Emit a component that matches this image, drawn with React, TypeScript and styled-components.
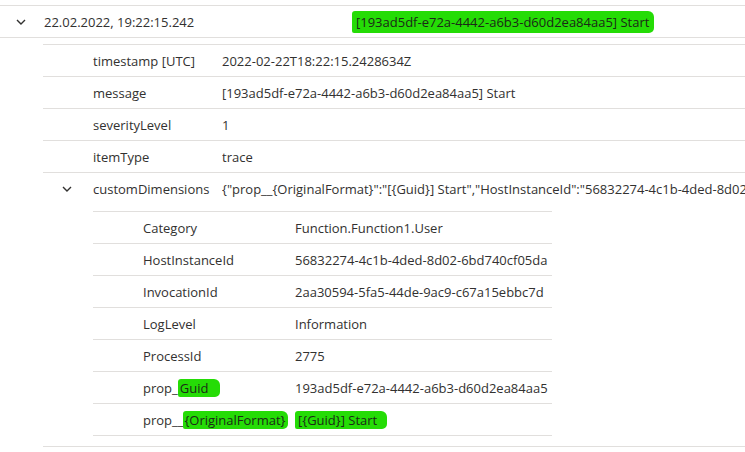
import React from 'react'
import styled, { createGlobalStyle } from 'styled-components'

const GlobalStyle = createGlobalStyle`
  html, body {
    margin: 0;
    padding: 0;
    background: #ffffff;
  }
  body {
    font-family: "Open Sans", "Noto Sans", sans-serif;
    font-size: 13px;
    color: #323130;
  }
`

const Page = styled.div`
  padding-top: 5px;
  width: 745px;
  height: 452px;
  overflow: hidden;
  box-sizing: border-box;
`

const HeaderRow = styled.div`
  display: flex;
  align-items: center;
  height: 33px;
  border-top: 1px solid #e1dfdd;
  border-bottom: 1px solid #e1dfdd;
  box-sizing: border-box;
`

const ToggleCell = styled.div<{ $width: number }>`
  flex: 0 0 ${p => p.$width}px;
  display: flex;
  justify-content: center;
  align-items: center;
  padding-right: 2px;
  box-sizing: border-box;
`

const HeaderTime = styled.div`
  flex: 0 0 308px;
  white-space: nowrap;
`

const HeaderMessage = styled.div`
  flex: 1;
  white-space: nowrap;
`

const Marker = styled.span<{ $pad: string }>`
  background: #25dc06;
  color: #1b2a17;
  padding: ${p => p.$pad};
  border-radius: 3px 6px 5px 2px;
`

const Details = styled.div`
  margin-top: 6px;
  margin-left: 43px;
`

const DetailRow = styled.div`
  display: flex;
  align-items: center;
  height: 32px;
  border-top: 1px solid #e1dfdd;
  box-sizing: border-box;
  white-space: nowrap;
  overflow: hidden;
`

const DetailKey = styled.div`
  flex: 0 0 129px;
`

const DetailValue = styled.div`
  flex: 1;
  white-space: nowrap;
  overflow: hidden;
`

const Section = styled.div`
  border-top: 1px solid #e1dfdd;
  border-bottom: 1px solid #e1dfdd;
  padding-bottom: 10px;
  & > ${DetailRow} {
    border-top: none;
  }
`

const Nested = styled.div`
  margin-top: 6px;
  margin-left: 50px;
  width: 459px;
  border-bottom: 1px solid #e1dfdd;
`

const NestedRow = styled.div`
  display: flex;
  align-items: center;
  height: 32px;
  border-top: 1px solid #e1dfdd;
  box-sizing: border-box;
  white-space: nowrap;
`

const NestedKey = styled.div`
  flex: 0 0 202px;
  padding-left: 50px;
  box-sizing: border-box;
`

const NestedValue = styled.div`
  flex: 1;
`

type Pair = { key: React.ReactNode; value: React.ReactNode }

const details: Pair[] = [
  { key: 'timestamp [UTC]', value: '2022-02-22T18:22:15.2428634Z' },
  { key: 'message', value: '[193ad5df-e72a-4442-a6b3-d60d2ea84aa5] Start' },
  { key: 'severityLevel', value: '1' },
  { key: 'itemType', value: 'trace' },
]

const dimensions: Pair[] = [
  { key: 'Category', value: 'Function.Function1.User' },
  { key: 'HostInstanceId', value: '56832274-4c1b-4ded-8d02-6bd740cf05da' },
  { key: 'InvocationId', value: '2aa30594-5fa5-44de-9ac9-c67a15ebbc7d' },
  { key: 'LogLevel', value: 'Information' },
  { key: 'ProcessId', value: '2775' },
  {
    key: (
      <>
        prop_<Marker $pad="0 12px 0 2px">Guid</Marker>
      </>
    ),
    value: '193ad5df-e72a-4442-a6b3-d60d2ea84aa5',
  },
  {
    key: (
      <>
        prop__<Marker $pad="0 3px 0 1px">{'{OriginalFormat}'}</Marker>
      </>
    ),
    value: <Marker $pad="0 10px 0 3px">{'[{Guid}] Start'}</Marker>,
  },
]

const Chevron = () => (
  <svg width="10" height="6" viewBox="0 0 10 6" fill="none">
    <polyline points="1,1 5,5 9,1" stroke="#323130" strokeWidth="1.4" />
  </svg>
)

export default function App() {
  return (
    <>
      <GlobalStyle />
      <Page>
        <HeaderRow>
          <ToggleCell $width={44}>
            <Chevron />
          </ToggleCell>
          <HeaderTime>22.02.2022, 19:22:15.242</HeaderTime>
          <HeaderMessage>
            <Marker $pad="2px 5px 2px 4px">[193ad5df-e72a-4442-a6b3-d60d2ea84aa5] Start</Marker>
          </HeaderMessage>
        </HeaderRow>

        <Details>
          {details.map((d, i) => (
            <DetailRow key={i}>
              <ToggleCell $width={50} />
              <DetailKey>{d.key}</DetailKey>
              <DetailValue>{d.value}</DetailValue>
            </DetailRow>
          ))}

          <Section>
            <DetailRow>
              <ToggleCell $width={50}>
                <Chevron />
              </ToggleCell>
              <DetailKey>customDimensions</DetailKey>
              <DetailValue>
                {'{"prop__{OriginalFormat}":"[{Guid}] Start","HostInstanceId":"56832274-4c1b-4ded-8d02-6bd740cf05da","InvocationId":"2aa30594-5fa5-44de-9ac9-c67a15ebbc7d"}'}
              </DetailValue>
            </DetailRow>
            <Nested>
              {dimensions.map((d, i) => (
                <NestedRow key={i}>
                  <NestedKey>{d.key}</NestedKey>
                  <NestedValue>{d.value}</NestedValue>
                </NestedRow>
              ))}
            </Nested>
          </Section>
        </Details>
      </Page>
    </>
  )
}
